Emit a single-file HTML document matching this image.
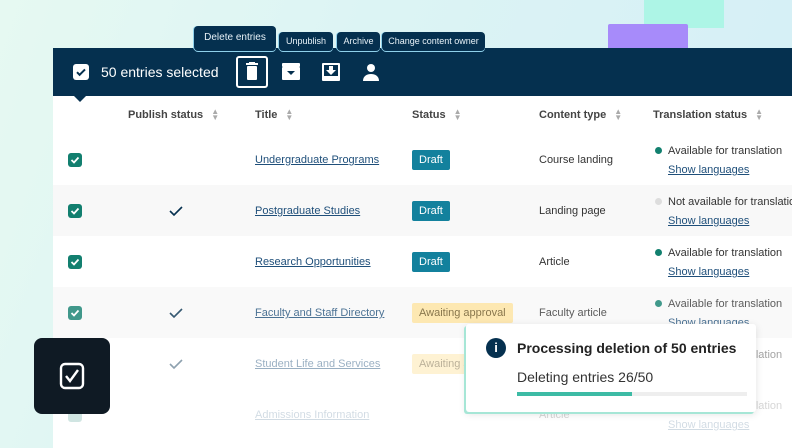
<!DOCTYPE html>
<html><head><meta charset="utf-8"><style>
*{margin:0;padding:0;box-sizing:border-box}
body{width:792px;height:448px;overflow:hidden;position:relative;font-family:"Liberation Sans",sans-serif;background:linear-gradient(110deg,#e6f9f2 0%,#dcf4f4 40%,#d4eef7 100%)}
.abs{position:absolute}
.tip{position:absolute;background:#05304f;color:#e8f2f8;border-radius:4px;font-size:9px;text-align:center;white-space:nowrap;box-shadow:0 1px 0 #8fd0ea,-1px 0 0 #8fd0ea}
.panel{position:absolute;left:53px;top:48px;width:739px;height:400px;background:#fff}
.bar{position:absolute;left:0;top:0;width:739px;height:48px;background:#05304f}
.row{position:absolute;left:0;width:739px;height:51px;font-size:11px;color:#333}
.row.g{background:#f8f8f8}
.cb{position:absolute;left:15px;top:19px;width:14px;height:14px;background:#127f6f;border-radius:3px}
.cb svg{position:absolute;left:2px;top:2px}
.lnk{position:absolute;left:202px;top:20px;color:#1f4f7a;text-decoration:underline}
.tag{position:absolute;left:359px;top:16px;height:20px;line-height:20px;padding:0 7px;background:#13819d;color:#fff;border-radius:2px;font-size:11px}
.tag.a{background:#fde3a0;color:#6b5520}
.ct{position:absolute;left:486px;top:20px}
.tr{position:absolute;left:602px;top:11px;white-space:nowrap}
.tr i{display:inline-block;width:7px;height:7px;border-radius:50%;background:#12806f;margin-right:6px}
.tr a{display:block;margin:7px 0 0 13px;color:#1f4f7a;text-decoration:underline}
.th{position:absolute;top:61px;font-size:11px;font-weight:bold;color:#444}
.srt{display:inline-block;margin-left:8px;color:#aaa;font-size:8px;line-height:6px;vertical-align:middle}
</style></head><body>
<div class="abs" style="left:644px;top:0;width:80px;height:28px;background:#adf5e6"></div>
<div class="abs" style="left:608px;top:24px;width:80px;height:26px;background:#a78bfa;border-radius:2px 2px 0 0"></div>
<div class="panel">
<div class="bar">
 <div class="abs" style="left:20px;top:16px;width:16px;height:16px;background:#fff;border-radius:3px"><svg width="16" height="16"><path d="M4 8.2l2.6 2.6L12 5.4" stroke="#05304f" stroke-width="2" fill="none"/></svg></div>
 <div class="abs" style="left:48px;top:16px;color:#fff;font-size:14px">50 entries selected</div>
 <div class="abs" style="left:183px;top:8px;width:32px;height:32px;border:2px solid #fff;border-radius:3px"><svg width="28" height="28"><rect x="8" y="5" width="12" height="2" fill="#fff"/><rect x="11" y="4" width="6" height="2" fill="#fff"/><rect x="9" y="8" width="10" height="14" fill="#fff" rx="1"/></svg></div>
 <svg class="abs" style="left:228px;top:14px" width="20" height="20"><rect x="1" y="1" width="18" height="4" fill="#fff" rx="1"/><rect x="1" y="5" width="18" height="13" fill="#fff" rx="1"/><path d="M6 9h8l-4 4z" fill="#05304f"/></svg>
 <svg class="abs" style="left:268px;top:14px" width="20" height="20"><rect x="1" y="1" width="18" height="18" fill="#fff" rx="1"/><rect x="3" y="3" width="14" height="11" fill="#05304f"/><path d="M8 4h4v4h3l-5 5-5-5h3z" fill="#fff"/></svg>
 <svg class="abs" style="left:308px;top:14px" width="20" height="20"><circle cx="10" cy="6" r="4" fill="#fff"/><path d="M2 19c0-5 4-7 8-7s8 2 8 7z" fill="#fff"/></svg>
 <svg class="abs" style="left:20px;top:47px" width="14" height="8"><path d="M0 0h14L7 7z" fill="#05304f"/></svg>
</div>
<div class="th" style="left:75px">Publish status<span class="srt">▲<br>▼</span></div>
<div class="th" style="left:202px">Title<span class="srt">▲<br>▼</span></div>
<div class="th" style="left:359px">Status<span class="srt">▲<br>▼</span></div>
<div class="th" style="left:486px">Content type<span class="srt">▲<br>▼</span></div>
<div class="th" style="left:600px">Translation status<span class="srt">▲<br>▼</span></div>

<div class="row" style="top:86px"><div class="cb"><svg width="10" height="10"><path d="M1.5 5l2.5 2.5L8.5 2.5" stroke="#fff" stroke-width="1.8" fill="none"/></svg></div><div class="lnk">Undergraduate Programs</div><div class="tag">Draft</div><div class="ct">Course landing</div><div class="tr"><i></i>Available for translation<a>Show languages</a></div></div>
<div class="row g" style="top:137px"><div class="cb"><svg width="10" height="10"><path d="M1.5 5l2.5 2.5L8.5 2.5" stroke="#fff" stroke-width="1.8" fill="none"/></svg></div><svg class="abs" style="left:116px;top:20px" width="14" height="12"><path d="M1 6l4 4 8-8" stroke="#05304f" stroke-width="1.6" fill="none"/></svg><div class="lnk">Postgraduate Studies</div><div class="tag">Draft</div><div class="ct">Landing page</div><div class="tr"><i style="background:#ddd"></i>Not available for translation<a>Show languages</a></div></div>
<div class="row" style="top:188px"><div class="cb"><svg width="10" height="10"><path d="M1.5 5l2.5 2.5L8.5 2.5" stroke="#fff" stroke-width="1.8" fill="none"/></svg></div><div class="lnk">Research Opportunities</div><div class="tag">Draft</div><div class="ct">Article</div><div class="tr"><i></i>Available for translation<a>Show languages</a></div></div>
<div class="row g" style="top:239px;opacity:.8"><div class="cb"><svg width="10" height="10"><path d="M1.5 5l2.5 2.5L8.5 2.5" stroke="#fff" stroke-width="1.8" fill="none"/></svg></div><svg class="abs" style="left:116px;top:20px" width="14" height="12"><path d="M1 6l4 4 8-8" stroke="#05304f" stroke-width="1.6" fill="none"/></svg><div class="lnk">Faculty and Staff Directory</div><div class="tag a">Awaiting approval</div><div class="ct">Faculty article</div><div class="tr"><i></i>Available for translation<a>Show languages</a></div></div>
<div class="row" style="top:290px;opacity:.45"><div class="cb"></div><svg class="abs" style="left:116px;top:20px" width="14" height="12"><path d="M1 6l4 4 8-8" stroke="#05304f" stroke-width="1.6" fill="none"/></svg><div class="lnk">Student Life and Services</div><div class="tag a">Awaiting approval</div><div class="ct">Article</div><div class="tr"><i></i>Available for translation<a>Show languages</a></div></div>
<div class="row" style="top:341px;opacity:.2"><div class="cb"></div><div class="lnk">Admissions Information</div><div class="ct">Article</div><div class="tr"><i></i>Available for translation<a>Show languages</a></div></div>
</div>
<div class="tip" style="left:194px;top:26px;width:82px;height:25px;line-height:24px;font-size:10px">Delete entries</div>
<div class="tip" style="left:279px;top:32px;width:54px;height:19px;line-height:19px">Unpublish</div>
<div class="tip" style="left:337px;top:32px;width:43px;height:19px;line-height:19px">Archive</div>
<div class="tip" style="left:382px;top:32px;width:103px;height:19px;line-height:19px">Change content owner</div>
<div class="abs" style="left:466px;top:324px;width:290px;height:88px;background:#fff;border-radius:3px;box-shadow:-2px 2px 0 #a6e6d6,0 2px 8px rgba(0,0,0,.12)">
 <div class="abs" style="left:20px;top:14px;width:20px;height:20px;border-radius:50%;background:#05304f;color:#fff;font-weight:bold;font-size:13px;text-align:center;line-height:20px">i</div>
 <div class="abs" style="left:51px;top:16px;font-size:14px;font-weight:bold;color:#222">Processing deletion of 50 entries</div>
 <div class="abs" style="left:51px;top:45px;font-size:14px;color:#333">Deleting entries 26/50</div>
 <div class="abs" style="left:51px;top:68px;width:230px;height:4px;background:#eee"><div style="width:115px;height:4px;background:#3dbba5"></div></div>
</div>
<div class="abs" style="left:34px;top:338px;width:76px;height:76px;background:#0f1a24;border-radius:8px"><svg style="position:absolute;left:24px;top:24px" width="28" height="28"><rect x="3" y="2" width="22" height="24" rx="4" fill="none" stroke="#fff" stroke-width="2.4"/><path d="M8 14l4 5 8-11" stroke="#fff" stroke-width="2.4" fill="none"/></svg></div>
</body></html>
